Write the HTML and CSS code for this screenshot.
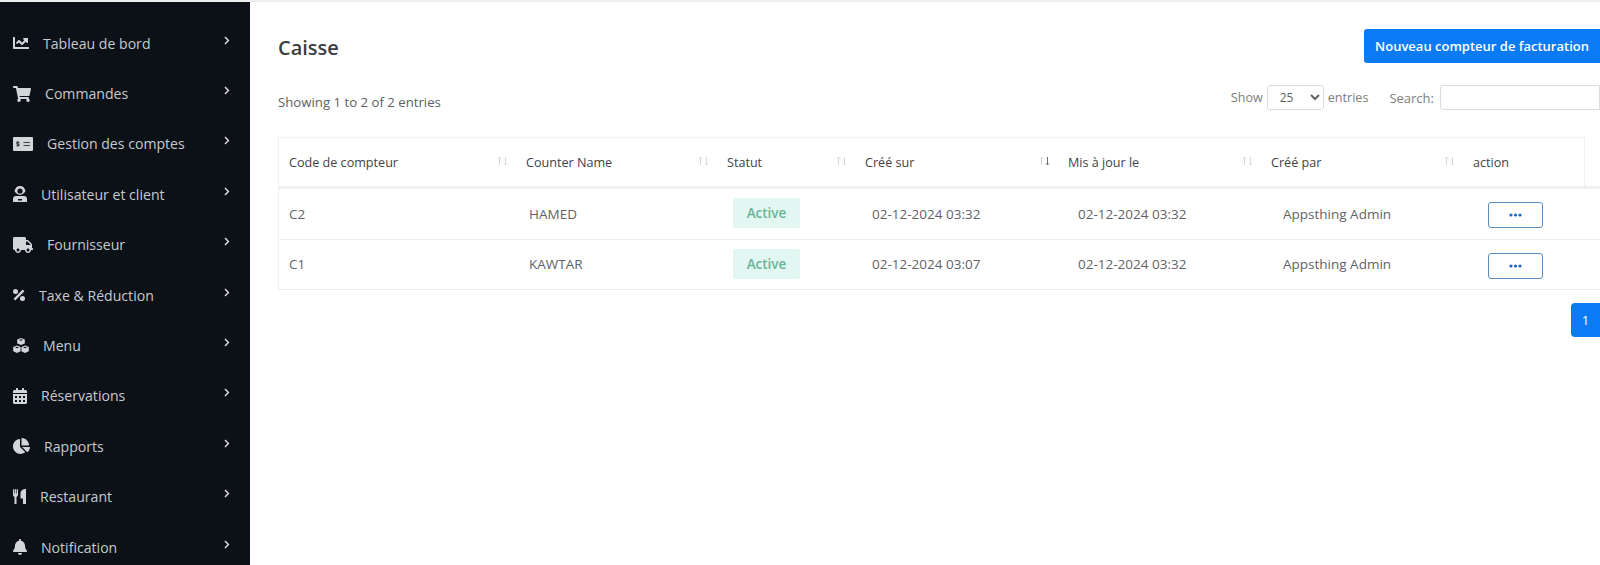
FILE: index.html
```html
<!DOCTYPE html>
<html lang="fr">
<head>
<meta charset="utf-8">
<title>Caisse</title>
<link rel="stylesheet" href="styles.css">
</head>
<body>
<div class="topline"></div>
<div class="shell">
  <nav class="sidebar">
    <a class="nav-item"><svg class="ico" width="16" height="16" viewBox="0 0 512 512"><path d="M496 384H64V80c0-8.84-7.16-16-16-16H16C7.16 64 0 71.16 0 80v336c0 17.67 14.33 32 32 32h464c8.84 0 16-7.16 16-16v-32c0-8.84-7.16-16-16-16zM464 96H345.94c-21.38 0-32.09 25.85-16.97 40.97l32.4 32.4L288 242.75l-73.37-73.37c-12.5-12.5-32.76-12.5-45.25 0l-68.69 68.69c-6.25 6.25-6.25 16.38 0 22.63l22.62 22.62c6.25 6.25 16.38 6.25 22.63 0L192 237.25l73.37 73.37c12.5 12.5 32.76 12.5 45.25 0l96-96 32.4 32.4c15.12 15.12 40.97 4.41 40.97-16.97V112c.01-8.84-7.15-16-15.99-16z"/></svg><span>Tableau de bord</span><svg class="chev" width="6" height="9" viewBox="0 0 6 9"><path d="M1 1l3.4 3.5L1 8"/></svg></a>
    <a class="nav-item"><svg class="ico" width="18" height="16" viewBox="0 0 576 512"><path d="M528.12 301.319l47.273-208C578.806 78.301 567.391 64 551.99 64H159.208l-9.166-44.81C147.758 8.021 137.93 0 126.529 0H24C10.745 0 0 10.745 0 24v16c0 13.255 10.745 24 24 24h69.883l70.248 343.435C147.325 417.1 136 435.222 136 456c0 30.928 25.072 56 56 56s56-25.072 56-56c0-15.674-6.447-29.835-16.824-40h209.647C430.447 426.165 424 440.326 424 456c0 30.928 25.072 56 56 56s56-25.072 56-56c0-22.172-12.888-41.332-31.579-50.405l5.517-24.276c3.413-15.018-8.002-29.319-23.403-29.319H218.117l-6.545-32h293.145c11.206 0 20.92-7.754 23.403-18.681z"/></svg><span>Commandes</span><svg class="chev" width="6" height="9" viewBox="0 0 6 9"><path d="M1 1l3.4 3.5L1 8"/></svg></a>
    <a class="nav-item"><svg class="ico" width="20" height="14" viewBox="0 0 20 14"><path fill-rule="evenodd" d="M1 0h18a1 1 0 0 1 1 1v12a1 1 0 0 1-1 1H1a1 1 0 0 1-1-1V1a1 1 0 0 1 1-1zM10.500 5v.8h6.500V5zM10.500 8.200V9h6.500v-.8zM4.500 4v.8H3.500v2.600h1.900v.8H3.500V9h1v.8h.8V9h1V6.600H4.300v-.8h2V5h-1V4z"/></svg><span>Gestion des comptes</span><svg class="chev" width="6" height="9" viewBox="0 0 6 9"><path d="M1 1l3.400 3.500L1 8"/></svg></a>
    <a class="nav-item"><svg class="ico" width="14" height="16" viewBox="0 0 14 16"><path fill-rule="evenodd" d="M7 0a5 5 0 0 1 4.700 3.300h.5v3h-.7A5 5 0 0 1 2.500 6.300h-.7v-3h.5A5 5 0 0 1 7 0zM7 2.400a2.600 2.600 0 1 0 0 5.200 2.600 2.600 0 0 0 0-5.200zM3 10h8a3 3 0 0 1 3 3v3H0v-3a3 3 0 0 1 3-3zM5 13v1.400h4V13z"/></svg><span>Utilisateur et client</span><svg class="chev" width="6" height="9" viewBox="0 0 6 9"><path d="M1 1l3.400 3.500L1 8"/></svg></a>
    <a class="nav-item"><svg class="ico" width="20" height="16" viewBox="0 0 640 512"><path d="M624 352h-16V243.900c0-12.700-5.100-24.900-14.100-33.900L494 110.100c-9-9-21.200-14.100-33.900-14.100H416V48c0-26.500-21.500-48-48-48H48C21.500 0 0 21.500 0 48v320c0 26.500 21.500 48 48 48h16c0 53 43 96 96 96s96-43 96-96h128c0 53 43 96 96 96s96-43 96-96h48c8.800 0 16-7.200 16-16v-32c0-8.800-7.200-16-16-16zM160 464c-26.500 0-48-21.500-48-48s21.500-48 48-48 48 21.500 48 48-21.500 48-48 48zm320 0c-26.500 0-48-21.500-48-48s21.500-48 48-48 48 21.500 48 48-21.500 48-48 48zm80-208H416V144h44.100l99.900 99.900V256z"/></svg><span>Fournisseur</span><svg class="chev" width="6" height="9" viewBox="0 0 6 9"><path d="M1 1l3.400 3.500L1 8"/></svg></a>
    <a class="nav-item"><svg class="ico" width="12" height="12" viewBox="0 0 12 12"><circle cx="2.500" cy="2.500" r="2.500"/><circle cx="9.500" cy="9.500" r="2.500"/><path d="M9.700.6l1.700 1.700L2.300 11.400.6 9.700z"/></svg><span>Taxe &amp; Réduction</span><svg class="chev" width="6" height="9" viewBox="0 0 6 9"><path d="M1 1l3.400 3.500L1 8"/></svg></a>
    <a class="nav-item"><svg class="ico" width="16" height="15" viewBox="0 0 16 15"><path fill-rule="evenodd" d="M8 0l3.800 1.500v4L8 7 4.200 5.500v-4zM8 1.300L6 2l2 .8L10 2zM4 7.500l3.600 1.400v4.300L4 15 .2 13.200V8.900zM4 8.800l-2 .7 2 .8 2-.8zM12 7.500l3.800 1.400v4.300L12 15l-3.600-1.800V8.900zM12 8.800l-2 .7 2 .8 2-.8z"/></svg><span>Menu</span><svg class="chev" width="6" height="9" viewBox="0 0 6 9"><path d="M1 1l3.400 3.500L1 8"/></svg></a>
    <a class="nav-item"><svg class="ico" width="14" height="16" viewBox="0 0 448 512"><path d="M0 464c0 26.500 21.500 48 48 48h352c26.500 0 48-21.500 48-48V192H0v272zm320-196c0-6.600 5.400-12 12-12h40c6.600 0 12 5.400 12 12v40c0 6.600-5.400 12-12 12h-40c-6.600 0-12-5.400-12-12v-40zm0 128c0-6.600 5.400-12 12-12h40c6.600 0 12 5.400 12 12v40c0 6.600-5.400 12-12 12h-40c-6.600 0-12-5.400-12-12v-40zM192 268c0-6.600 5.400-12 12-12h40c6.600 0 12 5.400 12 12v40c0 6.600-5.400 12-12 12h-40c-6.600 0-12-5.400-12-12v-40zm0 128c0-6.600 5.400-12 12-12h40c6.600 0 12 5.400 12 12v40c0 6.600-5.400 12-12 12h-40c-6.600 0-12-5.400-12-12v-40zM64 268c0-6.600 5.400-12 12-12h40c6.600 0 12 5.400 12 12v40c0 6.600-5.400 12-12 12H76c-6.600 0-12-5.400-12-12v-40zm0 128c0-6.600 5.400-12 12-12h40c6.600 0 12 5.400 12 12v40c0 6.600-5.400 12-12 12H76c-6.600 0-12-5.400-12-12v-40zM400 64h-48V16c0-8.800-7.200-16-16-16h-32c-8.800 0-16 7.200-16 16v48H160V16c0-8.800-7.200-16-16-16h-32c-8.800 0-16 7.200-16 16v48H48C21.500 64 0 85.500 0 112v48h448v-48c0-26.500-21.500-48-48-48z"/></svg><span>Réservations</span><svg class="chev" width="6" height="9" viewBox="0 0 6 9"><path d="M1 1l3.400 3.500L1 8"/></svg></a>
    <a class="nav-item"><svg class="ico" width="17" height="16" viewBox="0 0 544 512"><path d="M527.790 288H290.500l158.030 158.030c6.040 6.040 15.980 6.530 22.190.68 38.700-36.460 65.320-85.610 73.130-140.860 1.340-9.460-6.510-17.850-16.060-17.850zm-15.830-64.800C503.720 103.740 408.260 8.280 288.800.04 279.680-.59 272 7.100 272 16.240V240h223.770c9.140 0 16.820-7.680 16.190-16.800zM224 288V50.710c0-9.550-8.390-17.400-17.840-16.060C86.990 51.490-4.100 155.600.14 280.370 4.500 408.510 114.830 513.590 243.030 511.980c50.400-.63 96.970-16.870 135.260-44.030 7.900-5.600 8.420-17.230 1.570-24.080L224 288z"/></svg><span>Rapports</span><svg class="chev" width="6" height="9" viewBox="0 0 6 9"><path d="M1 1l3.400 3.500L1 8"/></svg></a>
    <a class="nav-item"><svg class="ico" width="13" height="15" viewBox="0 0 13 15"><path d="M0 .3h1.300v4.200h.6V.3h1.200v4.200h.6V.3H5v5.500c0 1-.7 1.900-1.500 2.100V15H1.500V7.900C.7 7.700 0 6.800 0 5.800zM7.500 4.500C7.500 2 9.500 0 13 0v15h-3V9.500H7.500z"/></svg><span>Restaurant</span><svg class="chev" width="6" height="9" viewBox="0 0 6 9"><path d="M1 1l3.400 3.500L1 8"/></svg></a>
    <a class="nav-item"><svg class="ico" width="14" height="16" viewBox="0 0 448 512"><path d="M224 512c35.320 0 63.970-28.650 63.970-64H160.030c0 35.350 28.650 64 63.970 64zm215.390-149.710c-19.320-20.760-55.470-51.990-55.470-154.290 0-77.700-54.480-139.900-127.940-155.160V32c0-17.670-14.320-32-31.980-32s-31.980 14.330-31.980 32v20.840C118.560 68.100 64.080 130.300 64.080 208c0 102.300-36.150 133.530-55.470 154.290-6 6.450-8.660 14.160-8.610 21.710.11 16.400 12.980 32 32.100 32h383.800c19.120 0 32-15.600 32.100-32 .05-7.550-2.610-15.270-8.610-21.710z"/></svg><span>Notification</span><svg class="chev" width="6" height="9" viewBox="0 0 6 9"><path d="M1 1l3.400 3.500L1 8"/></svg></a>
  </nav>
  <main class="main">
    <header class="page-head">
      <h1 class="title">Caisse</h1>
      <button class="btn-new">Nouveau compteur de facturation</button>
    </header>
    <div class="toolbar">
      <div class="info">Showing 1 to 2 of 2 entries</div>
      <div class="filters">
        <label class="length">Show <select class="length-select"><option>25</option></select> entries</label>
        <label class="search">Search: <input class="search-input" type="text"></label>
      </div>
    </div>
    <div class="table">
      <div class="thead">
        <div class="th">Code de compteur<svg class="sort" width="11" height="10" viewBox="0 0 11 10"><path d="M2.500 9V1M1 2.500L2.500 1 4 2.500M8.500 1v8M7 7.500L8.500 9 10 7.500"/></svg></div>
        <div class="th">Counter Name<svg class="sort" width="11" height="10" viewBox="0 0 11 10"><path d="M2.500 9V1M1 2.500L2.500 1 4 2.500M8.500 1v8M7 7.500L8.500 9 10 7.500"/></svg></div>
        <div class="th">Statut<svg class="sort" width="11" height="10" viewBox="0 0 11 10"><path d="M2.500 9V1M1 2.500L2.500 1 4 2.500M8.500 1v8M7 7.500L8.500 9 10 7.500"/></svg></div>
        <div class="th">Créé sur<svg class="sort sort-active" width="11" height="10" viewBox="0 0 11 10"><path class="sort-up" d="M2.500 9V1M1 2.500L2.500 1 4 2.500"/><path class="sort-down" d="M8.500 1v8M7 7.500L8.500 9 10 7.500"/></svg></div>
        <div class="th">Mis à jour le<svg class="sort" width="11" height="10" viewBox="0 0 11 10"><path d="M2.500 9V1M1 2.500L2.500 1 4 2.500M8.500 1v8M7 7.500L8.500 9 10 7.500"/></svg></div>
        <div class="th">Créé par<svg class="sort" width="11" height="10" viewBox="0 0 11 10"><path d="M2.500 9V1M1 2.500L2.500 1 4 2.500M8.500 1v8M7 7.500L8.500 9 10 7.500"/></svg></div>
        <div class="th">action</div>
      </div>
      <div class="tbody">
        <div class="row">
          <div class="td">C2</div><div class="td">HAMED</div>
          <div class="td"><span class="badge">Active</span></div>
          <div class="td">02-12-2024 03:32</div><div class="td">02-12-2024 03:32</div><div class="td">Appsthing Admin</div>
          <div class="td"><button class="btn-more" aria-label="Actions"><svg width="13" height="4" viewBox="0 0 13 4"><circle cx="2" cy="2" r="1.600"/><circle cx="6.500" cy="2" r="1.600"/><circle cx="11" cy="2" r="1.600"/></svg></button></div>
        </div>
        <div class="row">
          <div class="td">C1</div><div class="td">KAWTAR</div>
          <div class="td"><span class="badge">Active</span></div>
          <div class="td">02-12-2024 03:07</div><div class="td">02-12-2024 03:32</div><div class="td">Appsthing Admin</div>
          <div class="td"><button class="btn-more" aria-label="Actions"><svg width="13" height="4" viewBox="0 0 13 4"><circle cx="2" cy="2" r="1.600"/><circle cx="6.500" cy="2" r="1.600"/><circle cx="11" cy="2" r="1.600"/></svg></button></div>
        </div>
      </div>
    </div>
    <div class="pager"><a class="page-current">1</a></div>
  </main>
</div>
</body>
</html>
```

FILE: styles.css
```css
* { box-sizing: border-box; }
html, body { margin: 0; height: 100%; }
body {
  display: flex;
  flex-direction: column;
  overflow: hidden;
  background: #fff;
  color: #5f6368;
  font-family: "Open Sans", "Noto Sans", sans-serif;
  font-size: 13px;
}
.topline { height: 2px; flex: none; background: #eceef0; }
.shell { flex: 1; display: flex; min-height: 0; }

.sidebar {
  flex: none;
  width: 250px;
  padding-top: 16px;
  background: #0c1017;
  overflow: hidden;
}
.nav-item {
  display: flex;
  align-items: center;
  gap: 14px;
  height: 50.4px;
  padding: 0 20px 0 13px;
  color: #c6cacd;
  font-size: 14.1px;
}
.ico { flex: none; fill: #d3d6d9; }
.chev {
  flex: none;
  margin-left: auto;
  margin-top: -6px;
  fill: none;
  stroke: #d8dadd;
  stroke-width: 1.500;
}

.main {
  flex: 1;
  min-width: 0;
  padding: 27px 0 0 28px;
  overflow: hidden;
}
.page-head {
  display: flex;
  justify-content: space-between;
  align-items: center;
  height: 34px;
}
.title {
  margin: 2px 0 0;
  color: #3a3d42;
  font-size: 20px;
  font-weight: 600;
}
.btn-new {
  width: 236px;
  height: 34px;
  padding: 0;
  border: 0;
  border-radius: 3px 0 0 3px;
  background: #0a7bf5;
  color: #fff;
  font: 600 13px "Open Sans", sans-serif;
}

.toolbar {
  display: flex;
  justify-content: space-between;
  align-items: flex-end;
  height: 25px;
  margin-top: 22px;
}
.info { color: #5b5f64; font-size: 13.200px; margin-bottom: -1px; }
.filters { display: flex; align-items: center; gap: 21px; color: #7a7e83; }
.length { display: flex; align-items: center; gap: 4px; font-size: 12.600px; }
.length-select {
  width: 57px;
  height: 25px;
  padding: 0 4px 0 8px;
  border: 1px solid #d9dcdf;
  border-radius: 3px;
  background: #fff;
  color: #5f6368;
  font: 12px "Open Sans", sans-serif;
}
.search { display: flex; align-items: center; gap: 6px; }
.search-input {
  width: 160px;
  height: 25px;
  border: 1px solid #d9dcdf;
  border-radius: 3px 0 0 3px;
}

.table { margin-top: 27px; }
.thead {
  display: grid;
  grid-template-columns: 237px 201px 138px 203px 203px 202px 1fr;
  height: 49px;
  margin-right: 15px;
  border: 1px solid #eff0f2;
  border-bottom: 0;
}
.th {
  position: relative;
  display: flex;
  align-items: center;
  padding-left: 10px;
  color: #3f4348;
  font-size: 12.600px;
  font-weight: 500;
}
.sort {
  position: absolute;
  top: 18px;
  right: 8px;
  fill: none;
  stroke: #d6d9dc;
  stroke-width: 1;
}
.sort-active .sort-down { stroke: #6b6f74; }
.tbody {
  border-top: 3px solid #eef0f3;
  border-left: 1px solid #eff0f2;
  font-size: 13.500px;
}
.row {
  display: grid;
  grid-template-columns: 240px 204px 139px 206px 205px 205px 1fr;
  height: 50.500px;
  border-bottom: 1px solid #e9ebed;
}
.td {
  display: flex;
  align-items: center;
  padding-left: 10px;
}
.badge {
  display: flex;
  align-items: center;
  justify-content: center;
  width: 67px;
  height: 30px;
  margin-top: -1px;
  border-radius: 2px;
  background: #e2f7f1;
  color: #6cb39a;
  font-weight: 600;
}
.btn-more {
  display: flex;
  align-items: center;
  justify-content: center;
  width: 55px;
  height: 26px;
  margin-top: 3px;
  padding: 0;
  border: 1px solid #5b8dbd;
  border-radius: 3px;
  background: #fff;
}
.btn-more svg { fill: #1b66c9; }

.pager {
  display: flex;
  justify-content: flex-end;
  margin-top: 13px;
}
.page-current {
  display: flex;
  align-items: center;
  justify-content: center;
  width: 29px;
  height: 34px;
  border-radius: 4px 0 0 4px;
  background: #0a7bf5;
  color: #fff;
  font-weight: 500;
}
```
